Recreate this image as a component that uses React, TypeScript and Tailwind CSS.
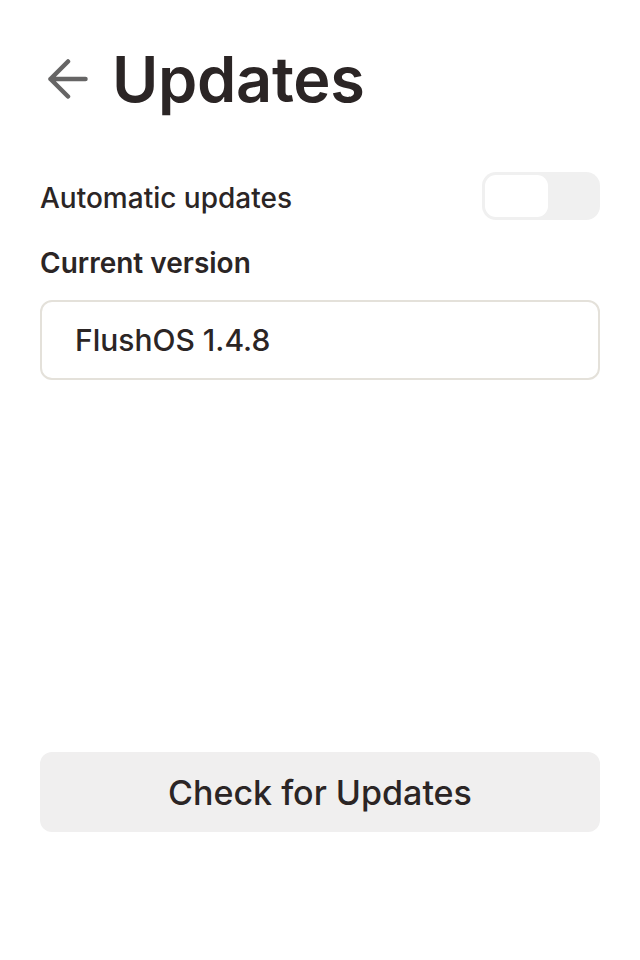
export default function App() {
  return (
    <div className="w-[640px] h-[960px] bg-white px-10 text-[#2b2525]" style={{ fontFamily: "Inter, 'Noto Sans', sans-serif" }}>
      <div className="flex items-center h-[80px] mt-[39px] gap-[24px]">
        <svg width="40" height="40" viewBox="0 0 40 40" fill="none" className="ml-[8px] shrink-0">
          <path d="M37.5 20H2.5M20 2.5L2.5 20L20 37.5" stroke="#666565" strokeWidth="4.5" strokeLinecap="round" strokeLinejoin="round" />
        </svg>
        <h1 className="text-[63px] font-semibold leading-none tracking-[-0.3px]">Updates</h1>
      </div>
      <div className="flex items-center justify-between mt-[53px] h-[48px]">
        <span className="text-[28px] font-medium pt-[4px]">Automatic updates</span>
        <div className="w-[118px] h-[48px] rounded-[14px] bg-[#f0f0f0] p-[3px] flex">
          <div className="w-[63px] h-full rounded-[11px] bg-white" />
        </div>
      </div>
      <div className="mt-[26px] text-[28px] font-semibold leading-[34px]">Current version</div>
      <div className="mt-[20px] h-[80px] rounded-[12px] border-2 border-[#e4e1da] flex items-center px-[33px] text-[30px] font-medium">
        FlushOS 1.4.8
      </div>
      <button className="mt-[372px] w-full h-[80px] rounded-[12px] bg-[#f0efef] text-[34px] font-medium flex items-center justify-center">
        Check for Updates
      </button>
    </div>
  );
}
